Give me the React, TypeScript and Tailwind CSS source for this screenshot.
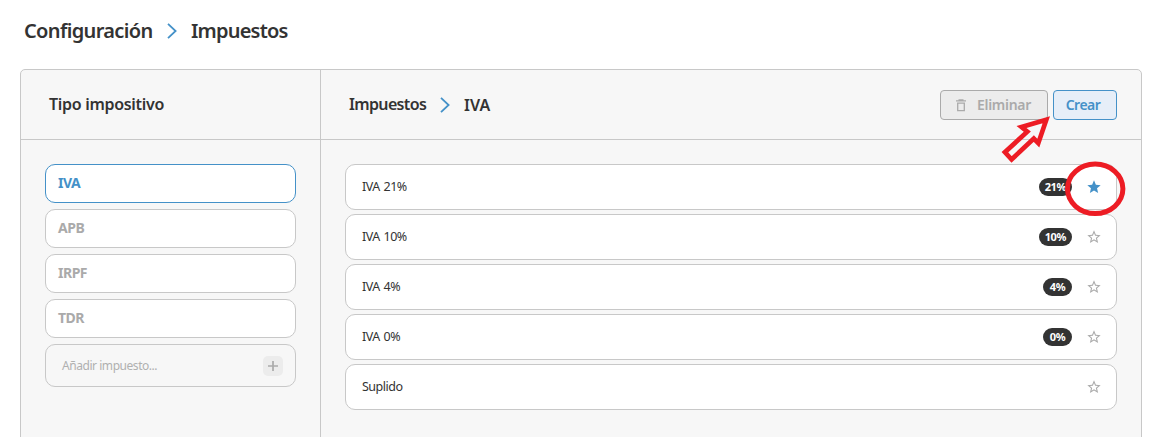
import React, { useState } from 'react';
import { MdStar, MdStarBorder } from 'react-icons/md';

interface Tax {
  name: string;
  rate?: string;
}

const taxTypes = ['IVA', 'APB', 'IRPF', 'TDR'];

const taxes: Tax[] = [
  { name: 'IVA 21%', rate: '21%' },
  { name: 'IVA 10%', rate: '10%' },
  { name: 'IVA 4%', rate: '4%' },
  { name: 'IVA 0%', rate: '0%' },
  { name: 'Suplido' },
];

const Chevron: React.FC = () => (
  <svg viewBox="0 0 10 16" className="h-4 w-2.5 shrink-0" fill="none" stroke="#4491c8" strokeWidth="1.8">
    <path d="M1 0.8 8.6 8 1 15.2" />
  </svg>
);

const Trash: React.FC = () => (
  <svg viewBox="0 0 10 13" className="mt-0.5 h-[13px] w-2.5 shrink-0" fill="none" stroke="currentColor" strokeWidth="1.3">
    <path d="M0 1.8H10M2.5 1H7.5M1.7 4.2H8.3V11.6H1.7Z" />
  </svg>
);

const Annotations: React.FC = () => (
  <svg viewBox="0 0 1164 437" className="pointer-events-none absolute left-0 top-0 h-[437px] w-[1164px]" fill="none" stroke="#ed1c24">
    <path d="M1046.3 119.7 1021.5 127 1027.3 131.7 1004.9 152.2 1011.6 159.5 1033.8 138.5 1038.3 143.2Z" strokeWidth="4.7" />
    <ellipse cx="1095.2" cy="188.8" rx="27.7" ry="24.7" strokeWidth="5" />
  </svg>
);

const App: React.FC = () => {
  const [selected, setSelected] = useState('IVA');
  const [favourite, setFavourite] = useState('IVA 21%');

  return (
    <div className="relative h-[437px] w-[1164px] overflow-hidden bg-white font-['Noto_Sans',sans-serif] text-[#333]">
      <h1 className="flex h-[61px] items-center pl-6 text-[20px] font-semibold">
        <span className="w-[143px] whitespace-nowrap tracking-[-0.65px]">Configuración</span>
        <Chevron />
        <span className="ml-3.5 tracking-[-0.8px]">Impuestos</span>
      </h1>

      <div className="ml-5 mt-2 flex h-[400px] w-[1122px] rounded-[5px] border border-[#c8c8c8] bg-[#f7f7f7]">
        <aside className="w-[300px] shrink-0 border-r border-[#c8c8c8]">
          <div className="flex h-[70px] items-center border-b border-[#c8c8c8] pl-7 text-[16px] font-semibold">
            <span className="pb-0.5 tracking-[-0.3px]">Tipo impositivo</span>
          </div>
          <div className="flex flex-col gap-1.5 px-6 pt-6">
            {taxTypes.map((type) => (
              <button
                key={type}
                onClick={() => setSelected(type)}
                className={`h-[39px] rounded-[10px] border bg-white pb-0.5 pl-3 text-left text-[14px] font-bold tracking-[-0.5px] ${
                  selected === type ? 'border-[#4491c8] text-[#4491c8]' : 'border-[#c8c8c8] text-[#aaa]'
                }`}
              >
                {type}
              </button>
            ))}
            <div className="flex h-[43px] items-center justify-between rounded-[10px] border border-[#c8c8c8] pl-4 pr-3 text-[12px] text-[#b0b0b0]">
              <span className="tracking-[-0.45px]">Añadir impuesto...</span>
              <button className="flex size-5 items-center justify-center rounded-[5px] bg-[#ececec]" aria-label="Añadir">
                <svg viewBox="0 0 10 10" className="size-2.5" stroke="#aaa" strokeWidth="1.7">
                  <path d="M5 0V10M0 5H10" />
                </svg>
              </button>
            </div>
          </div>
        </aside>

        <main className="grow">
          <div className="flex h-[70px] items-center border-b border-[#c8c8c8] pl-7 pr-6">
            <div className="flex items-center text-[16px] font-semibold">
              <span className="w-[91px] pb-0.5 tracking-[-0.65px]">Impuestos</span>
              <Chevron />
              <span className="ml-3.5">IVA</span>
            </div>
            <div className="ml-auto flex gap-[5px] text-[14px] font-semibold">
              <button className="flex h-[30px] w-[108px] items-center rounded-[4px] border border-[#aaa] bg-[#ececec] pl-[15px] text-[#aaa]">
                <Trash />
                <span className="ml-[11px] tracking-[-0.3px]">Eliminar</span>
              </button>
              <button className="h-[30px] w-16 rounded-[4px] border border-[#4491c8] bg-[#e6eef8] pr-1 tracking-[-0.5px] text-[#4491c8]">
                Crear
              </button>
            </div>
          </div>
          <div className="flex flex-col gap-1 px-6 pt-6">
            {taxes.map(({ name, rate }) => (
              <div key={name} className="flex h-[46px] items-center rounded-[10px] border border-[#c8c8c8] bg-white pl-4 pr-[14px] text-[12.5px]">
                <span className="tracking-[-0.5px] [word-spacing:1px]">{name}</span>
                {rate && (
                  <span className="ml-auto flex h-[18px] min-w-[29px] items-center justify-center rounded-full bg-[#333] px-1.5 text-[11px] font-bold tracking-[-0.4px] text-white">
                    {rate}
                  </span>
                )}
                <button onClick={() => setFavourite(name)} className={rate ? 'ml-[14px]' : 'ml-auto'} aria-label="Favorito">
                  {favourite === name ? <MdStar className="size-4 text-[#4491c8]" /> : <MdStarBorder className="size-4 text-[#aaa]" />}
                </button>
              </div>
            ))}
          </div>
        </main>
      </div>

      <Annotations />
    </div>
  );
};

export default App;
